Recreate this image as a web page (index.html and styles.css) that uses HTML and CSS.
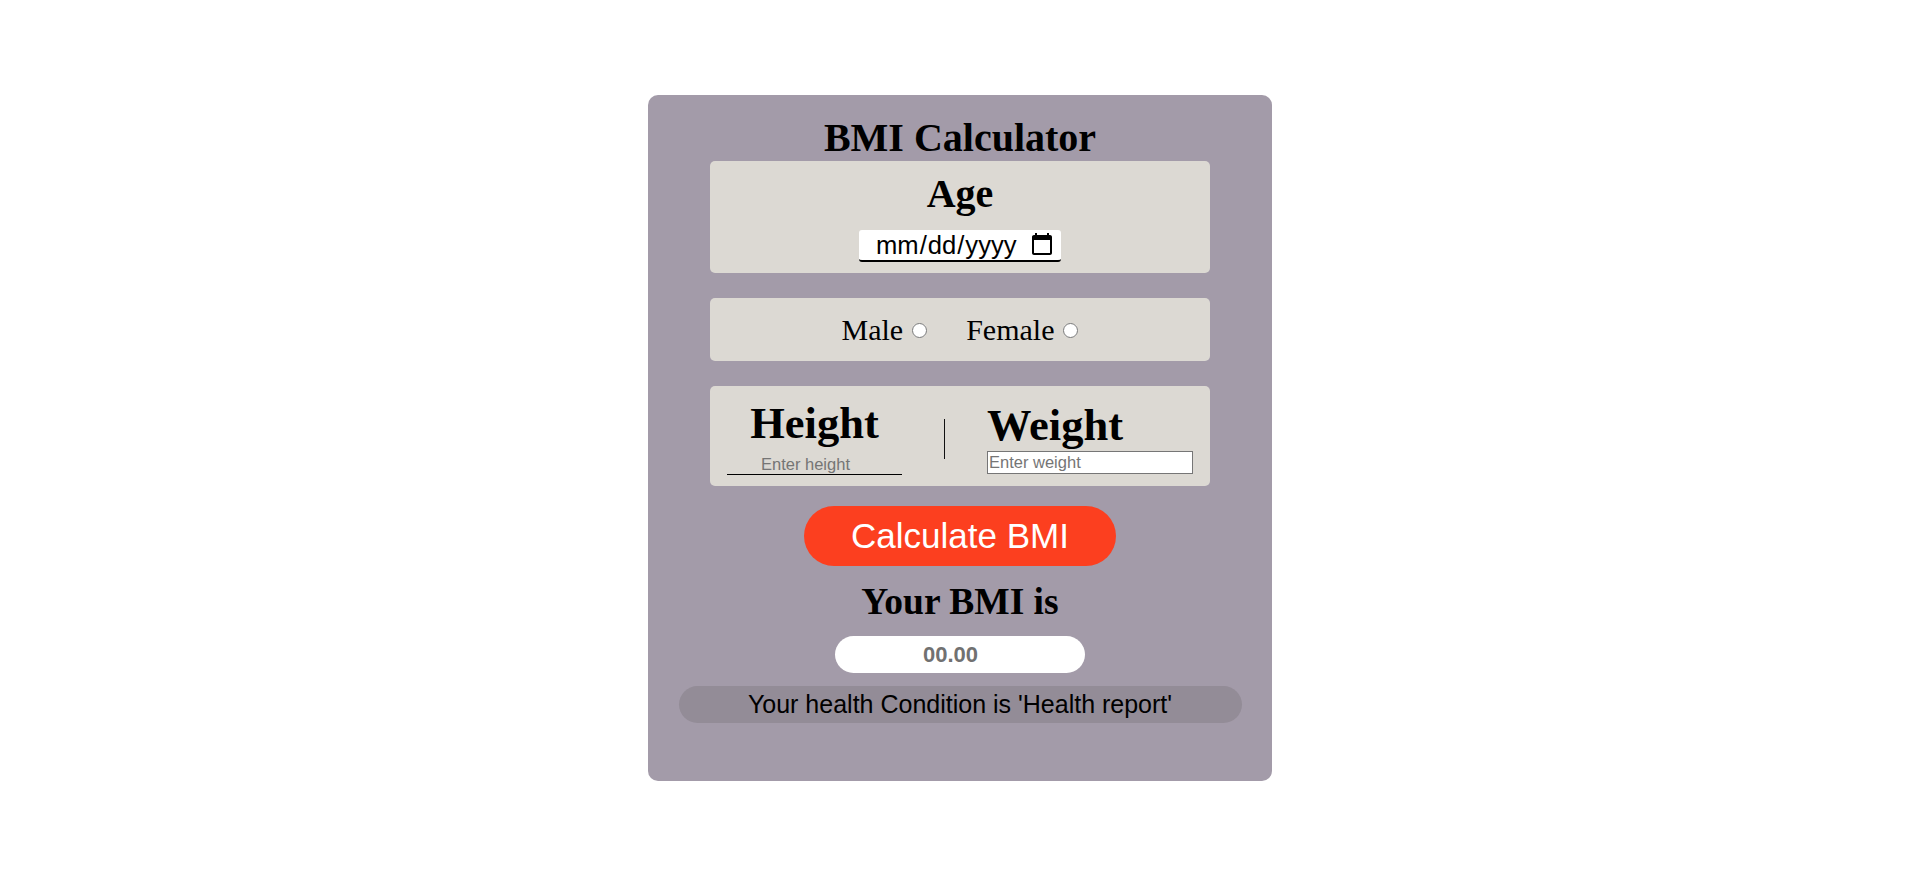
FILE: index.html
```html
<!DOCTYPE html>
<html lang="en">
<head>
<meta charset="utf-8">
<title>BMI Calculator</title>
<link rel="stylesheet" href="styles.css">
</head>
<body>
<main class="page">
  <section class="card">
    <h1 class="title">BMI Calculator</h1>

    <div class="box age-box">
      <h2 class="age-label">Age</h2>
      <input class="date-input" type="date">
    </div>

    <div class="box gender-box">
      <label class="gender"><span class="gender-text">Male</span><input class="radio" type="radio" name="gender"></label>
      <label class="gender"><span class="gender-text">Female</span><input class="radio" type="radio" name="gender"></label>
    </div>

    <div class="box hw-box">
      <div class="hw-col hw-height">
        <h2 class="hw-label">Height</h2>
        <input class="height-input" type="text" placeholder="Enter height">
      </div>
      <div class="divider"></div>
      <div class="hw-col hw-weight">
        <h2 class="hw-label">Weight</h2>
        <input class="weight-input" type="text" placeholder="Enter weight">
      </div>
    </div>

    <button class="calc-btn" type="button">Calculate BMI</button>

    <h2 class="result-title">Your BMI is</h2>
    <div class="result-value">00.00</div>
    <div class="health">Your health Condition is 'Health report'</div>
  </section>
</main>
</body>
</html>
```

FILE: styles.css
```css
* { box-sizing: border-box; }

html, body {
  margin: 0;
  padding: 0;
  background: #ffffff;
}

body {
  font-family: "Liberation Serif", "Times New Roman", serif;
  color: #000;
}

.page {
  padding-top: 95px;
  padding-left: 2px;
  display: flex;
  justify-content: center;
}

.card {
  width: 624px;
  height: 686px;
  background: #a39ba9;
  border-radius: 10px;
  padding-top: 21px;
  display: flex;
  flex-direction: column;
  align-items: center;
}

.title {
  margin: 0;
  font-size: 40px;
  line-height: 44px;
  font-weight: bold;
}

.box {
  width: 500px;
  background: #dcd9d3;
  border-radius: 5px;
}

.age-box {
  margin-top: 1px;
  height: 112px;
  padding-top: 12px;
  display: flex;
  flex-direction: column;
  align-items: center;
}

.age-label {
  margin: 0;
  font-size: 40px;
  line-height: 41px;
  font-weight: bold;
}

.date-input {
  margin-top: 16px;
  width: 202px;
  height: 32px;
  border: none;
  border-bottom: 2px solid #000;
  border-radius: 3px;
  background: #fff;
  font-family: "Liberation Sans", Arial, sans-serif;
  font-size: 25.6px;
  padding: 0 4px 0 16px;
  color: #000;
}

.gender-box {
  margin-top: 25px;
  height: 63px;
  display: flex;
  justify-content: center;
  align-items: center;
  gap: 39px;
}

.gender {
  display: flex;
  align-items: center;
}

.gender-text {
  font-size: 30px;
  line-height: 34px;
}

.radio {
  margin: 2px 0 0 9px;
  width: 15px;
  height: 15px;
}

.hw-box {
  margin-top: 25px;
  height: 100px;
  padding: 0 17px;
  display: flex;
  align-items: center;
}

.hw-col {
  display: flex;
  flex-direction: column;
}

.hw-height {
  width: 175px;
  align-items: center;
}

.hw-weight {
  width: 206px;
  margin-left: 42px;
  margin-top: 3px;
  align-items: flex-start;
}

.hw-label {
  margin: 0;
  font-size: 44.5px;
  line-height: 46px;
  font-weight: bold;
}

.hw-height .hw-label {
  margin-top: 2px;
}

.height-input {
  margin-top: 9px;
  width: 175px;
  height: 20px;
  border: none;
  border-bottom: 1px solid #000;
  background: transparent;
  font-family: "Liberation Sans", Arial, sans-serif;
  font-size: 16.5px;
  padding: 0 0 0 34px;
}

.weight-input {
  margin-top: 3px;
  width: 206px;
  height: 23px;
  border: 1px solid #767676;
  background: #fff;
  font-family: "Liberation Sans", Arial, sans-serif;
  font-size: 16.5px;
  padding: 1px 1px;
}

.height-input::placeholder,
.weight-input::placeholder {
  color: #757575;
}

.divider {
  margin-left: 42px;
  margin-top: 6px;
  width: 2px;
  height: 40px;
  background: #111;
}

.calc-btn {
  margin-top: 20px;
  width: 312px;
  height: 60px;
  border: none;
  border-radius: 30px;
  background: #fc3f1f;
  color: #fff;
  font-family: "Liberation Sans", Arial, sans-serif;
  font-size: 35px;
  line-height: 60px;
  padding: 0;
}

.result-title {
  margin: 16px 0 0;
  font-size: 37.5px;
  line-height: 40px;
  font-weight: bold;
}

.result-value {
  margin-top: 14px;
  width: 250px;
  height: 37px;
  border-radius: 18.5px;
  background: #fff;
  color: #717171;
  font-family: "Liberation Sans", Arial, sans-serif;
  font-size: 22px;
  font-weight: bold;
  line-height: 37px;
  text-align: center;
  padding-right: 19px;
}

.health {
  margin-top: 13px;
  width: 563px;
  height: 37px;
  border-radius: 18.5px;
  background: #938c97;
  color: #000;
  font-family: "Liberation Sans", Arial, sans-serif;
  font-size: 25px;
  line-height: 37px;
  text-align: center;
}
```
